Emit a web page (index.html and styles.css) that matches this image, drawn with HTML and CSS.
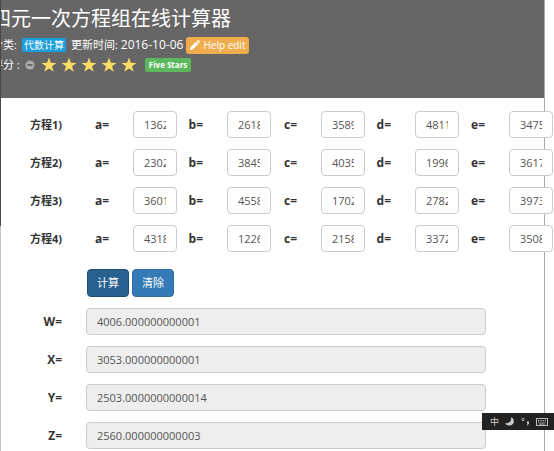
FILE: index.html
```html
<!DOCTYPE html>
<html lang="zh-CN">

<head>
    <meta charset="UTF-8">
    <title>四元一次方程组在线计算器</title>
    <link rel="stylesheet" href="styles.css">
</head>

<body>

    <svg class="sprite" aria-hidden="true">
        <symbol id="star" viewBox="0 0 16 16">
            <path d="M8 .5l1.9 5.3 5.6.1-4.5 3.4 1.7 5.4L8 11.5l-4.7 3.2L5 9.3.5 5.9l5.6-.1z"/>
        </symbol>
    </svg>

    <div class="panel">
        <header class="header">
            <h1>四元一次方程组在线计算器</h1>
            <div class="meta">
                <span>分类:</span>
                <a class="tag" href="#">代数计算</a>
                <span>更新时间:</span>
                <time>2016-10-06</time>
                <a class="help" href="#">
                    <svg width="10" height="10" viewBox="0 0 10 10"><path d="M0 10l.7-3L6 1.7 8.3 4 3 9.3zM6.7 1L7.5.2q.5-.4 1 0l1.3 1.3q.4.5 0 1L9 3.3z" fill="#fff"/></svg>
                    Help edit
                </a>
            </div>
            <div class="rating">
                <span>评分 :</span>
                <svg class="clear" width="10" height="10" viewBox="0 0 10 10"><circle cx="5" cy="5" r="4.6" fill="#aaa"/><path d="M2.5 5h5" stroke="#666" stroke-width="2"/></svg>
                <div class="stars">
                    <svg><use href="#star"/></svg>
                    <svg><use href="#star"/></svg>
                    <svg><use href="#star"/></svg>
                    <svg><use href="#star"/></svg>
                    <svg><use href="#star"/></svg>
                </div>
                <span class="caption">Five Stars</span>
            </div>
        </header>

        <form class="calc" id="calc">
            <div class="equation">
                <b>方程1)</b>
                <div class="cell"><label for="a1">a=</label><input type="text" id="a1" value="1362"></div>
                <div class="cell"><label for="b1">b=</label><input type="text" id="b1" value="2618"></div>
                <div class="cell"><label for="c1">c=</label><input type="text" id="c1" value="3589"></div>
                <div class="cell"><label for="d1">d=</label><input type="text" id="d1" value="4811"></div>
                <div class="cell"><label for="e1">e=</label><input type="text" id="e1" value="3475"></div>
            </div>
            <div class="equation">
                <b>方程2)</b>
                <div class="cell"><label for="a2">a=</label><input type="text" id="a2" value="2302"></div>
                <div class="cell"><label for="b2">b=</label><input type="text" id="b2" value="3845"></div>
                <div class="cell"><label for="c2">c=</label><input type="text" id="c2" value="4035"></div>
                <div class="cell"><label for="d2">d=</label><input type="text" id="d2" value="1996"></div>
                <div class="cell"><label for="e2">e=</label><input type="text" id="e2" value="3617"></div>
            </div>
            <div class="equation">
                <b>方程3)</b>
                <div class="cell"><label for="a3">a=</label><input type="text" id="a3" value="3601"></div>
                <div class="cell"><label for="b3">b=</label><input type="text" id="b3" value="4558"></div>
                <div class="cell"><label for="c3">c=</label><input type="text" id="c3" value="1702"></div>
                <div class="cell"><label for="d3">d=</label><input type="text" id="d3" value="2782"></div>
                <div class="cell"><label for="e3">e=</label><input type="text" id="e3" value="3973"></div>
            </div>
            <div class="equation">
                <b>方程4)</b>
                <div class="cell"><label for="a4">a=</label><input type="text" id="a4" value="4318"></div>
                <div class="cell"><label for="b4">b=</label><input type="text" id="b4" value="1226"></div>
                <div class="cell"><label for="c4">c=</label><input type="text" id="c4" value="2158"></div>
                <div class="cell"><label for="d4">d=</label><input type="text" id="d4" value="3372"></div>
                <div class="cell"><label for="e4">e=</label><input type="text" id="e4" value="3508"></div>
            </div>

            <div class="buttons">
                <button type="button" class="active">计算</button>
                <button type="button">清除</button>
            </div>

            <div class="result"><label for="w">W=</label><input type="text" id="w" value="4006.000000000001" readonly></div>
            <div class="result"><label for="x">X=</label><input type="text" id="x" value="3053.000000000001" readonly></div>
            <div class="result"><label for="y">Y=</label><input type="text" id="y" value="2503.0000000000014" readonly></div>
            <div class="result"><label for="z">Z=</label><input type="text" id="z" value="2560.000000000003" readonly></div>
        </form>
    </div>

    <!-- input method bar -->
    <div class="ime">
        <span>中</span>
        <svg width="9" height="9" viewBox="0 0 9 9"><path d="M6 0Q7 6 0 6.5Q2 9 5 8.5Q10 7 8.5 2.5Q8 1 6 0z" fill="#ccc"/></svg>
        <svg width="9" height="9" viewBox="0 0 9 9"><circle cx="2" cy="2.5" r="1.2" fill="none" stroke="#ccc" stroke-width=".8"/><path d="M6 4.5h2v2L6.5 8.5H6l.6-2H6z" fill="#ccc"/></svg>
        <svg width="12" height="8" viewBox="0 0 12 8"><rect x=".5" y=".5" width="11" height="7" fill="none" stroke="#bbb"/><path d="M2 2.5h8M2 4.2h8" stroke="#bbb" stroke-dasharray="1 .7"/><path d="M3 6h6" stroke="#bbb"/></svg>
    </div>

</body>

</html>
```
FILE: styles.css
```css
* {
    box-sizing: border-box;
}

body {
    margin: 0;
    padding: 0 9px 0 1px;
    font-family: "Open Sans", "Noto Sans CJK SC", sans-serif;
    font-size: 11px;
    line-height: 16px;
    color: #333;
    background: linear-gradient(#484848 226px, #c4c4c4 0) no-repeat #fff;
    background-size: 1px 100%;
    min-height: 100vh;
}

.sprite {
    position: absolute;
    width: 0;
    height: 0;
}

.panel {
    border-right: 1px solid #aaa;
    min-height: 100vh;
}

.header {
    height: 98px;
    padding-top: 5px;
    background: #666;
    color: #fff;
    overflow: hidden;
}

.header h1 {
    margin: 0 0 3px -10px;
    font-size: 20px;
    line-height: 28px;
    font-weight: 400;
    white-space: nowrap;
}

.meta,
.rating {
    display: flex;
    align-items: center;
    margin-left: -9px;
    white-space: nowrap;
}

.meta {
    height: 18px;
}

.tag {
    margin: 0 5px;
    padding: 0 2px;
    font-size: 10px;
    line-height: 14px;
    color: #fff;
    background: #1b9fdc;
    border-radius: 2px;
    text-decoration: none;
}

.meta time {
    margin: 0 3px;
    font-size: 12px;
}

.help {
    display: flex;
    align-items: center;
    gap: 3px;
    padding: 0 4px;
    font-size: 10px;
    line-height: 17px;
    color: #fff;
    background: #f0ad4e;
    border-radius: 3px;
    text-decoration: none;
}

.rating {
    height: 22px;
}

.clear {
    margin: 0 6px 0 5px;
}

.stars {
    display: flex;
    gap: 4px;
}

.stars svg {
    width: 16px;
    height: 16px;
    fill: #fbdd62;
}

.caption {
    margin-left: 8px;
    padding: 0 4px;
    font-size: 8px;
    line-height: 14px;
    font-weight: 700;
    background: #5cb85c;
    border-radius: 2px;
}

.calc {
    padding: 13px 0 1px;
    display: grid;
    gap: 11px;
}

.equation {
    display: grid;
    grid-template-columns: 82px repeat(5, 1fr);
    align-items: center;
    /* the last column hangs over the panel edge */
    margin-right: -9px;
}

.equation b {
    padding-right: 21px;
    text-align: right;
}

label {
    font-size: 12px;
    font-weight: 700;
    text-align: right;
}

.cell {
    display: flex;
    align-items: center;
    gap: 24px;
}

.cell label {
    flex: none;
    width: 26px;
}

input {
    width: 100%;
    min-width: 0;
    height: 27px;
    padding: 4px 10px;
    font: inherit;
    color: #555;
    background: #fff;
    border: 1px solid #ccc;
    border-radius: 4px;
}

input[readonly] {
    background: #eee;
}

.buttons {
    display: flex;
    gap: 3px;
    margin: 6px 0 0 86px;
}

button {
    height: 28px;
    padding: 0 9px;
    font: inherit;
    color: #fff;
    background: #337ab7;
    border: 1px solid #2e6da4;
    border-radius: 4px;
}

button.active {
    background: #286090;
    border-color: #204d74;
}

.result {
    display: grid;
    grid-template-columns: 61px 1fr;
    column-gap: 24px;
    align-items: center;
    padding-right: 58px;
}

.ime {
    position: fixed;
    right: 0;
    bottom: 21px;
    display: flex;
    align-items: center;
    justify-content: space-between;
    width: 72px;
    height: 17px;
    padding: 0 6px 0 8px;
    font-size: 9px;
    color: #ccc;
    background: #222;
}
```
